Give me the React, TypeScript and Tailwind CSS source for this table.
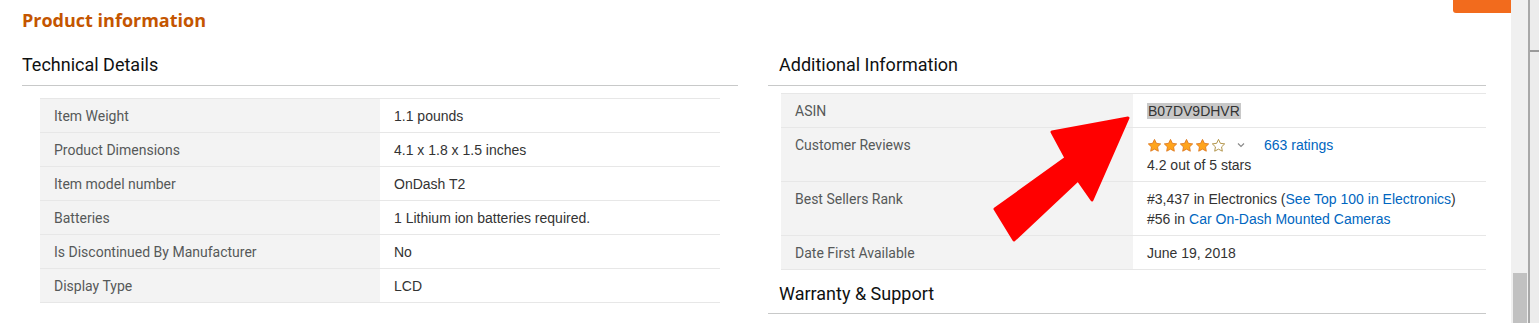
import React from "react";

const ember = { fontFamily: "Roboto, 'Noto Sans', sans-serif" };
const arial = { fontFamily: "'Liberation Sans', Arial, sans-serif" };

function Star({ filled }: { filled: boolean }) {
  return (
    <svg width="15" height="15" viewBox="0 0 24 24" className="mr-[1px]">
      <path
        d="M12 2.2l3 6.3 6.9 0.9-5 4.8 1.2 6.9L12 17.8l-6.1 3.3 1.2-6.9-5-4.8 6.9-0.9z"
        fill={filled ? "#ffa41c" : "#ffffff"}
        stroke={filled ? "#de7921" : "#a88734"}
        strokeWidth="1.4"
        strokeLinejoin="round"
      />
    </svg>
  );
}

function Row({
  label,
  children,
  lw,
  vw,
}: {
  label: string;
  children: React.ReactNode;
  lw: string;
  vw: string;
}) {
  return (
    <div className="flex border-b border-[#e7e7e7]">
      <div
        className={`${lw} bg-[#f3f3f3] pl-[14px] pt-[7px] pb-[6px] text-[14px] leading-[20px] text-[#565959]`}
        style={ember}
      >
        {label}
      </div>
      <div
        className={`${vw} pl-[14px] pt-[7px] pb-[6px] text-[14px] leading-[20px] text-[#333333]`}
        style={arial}
      >
        {children}
      </div>
    </div>
  );
}

function Heading({ children, indent }: { children: React.ReactNode; indent?: boolean }) {
  return (
    <div
      className={`${indent ? "pl-[11px]" : ""} pt-[13px] pb-[8px] border-b border-[#c8c9c9] text-[18px] leading-[24px] text-[#0f1111]`}
      style={ember}
    >
      {children}
    </div>
  );
}

export default function App() {
  const left: [string, string][] = [
    ["Item Weight", "1.1 pounds"],
    ["Product Dimensions", "4.1 x 1.8 x 1.5 inches"],
    ["Item model number", "OnDash T2"],
    ["Batteries", "1 Lithium ion batteries required."],
    ["Is Discontinued By Manufacturer", "No"],
    ["Display Type", "LCD"],
  ];
  return (
    <div className="relative flex w-[1539px] h-[323px] overflow-hidden bg-white">
      <div className="w-[1511px] flex flex-col">
        <div className="flex justify-between items-start h-[40px]">
          <div
            className="pl-[22px] pt-[8px] text-[18px] leading-[24px] font-bold text-[#c45500]"
            style={{ fontFamily: "'Open Sans', Roboto, sans-serif" }}
          >
            Product information
          </div>
          <div className="w-[58px] h-[13px] bg-[#f26b1d] rounded-bl-[3px]" />
        </div>
        <div className="flex">
          <div className="ml-[22px] w-[716px]">
            <Heading>Technical Details</Heading>
            <div className="ml-[18px] w-[680px] mt-[12px] border-t border-[#e7e7e7]">
              {left.map(([l, v]) => (
                <Row key={l} label={l} lw="w-[340px]" vw="w-[340px]">
                  {v}
                </Row>
              ))}
            </div>
          </div>
          <div className="ml-[30px] w-[718px]">
            <Heading indent>Additional Information</Heading>
            <div className="ml-[13px] w-[705px] mt-[7px] border-t border-[#e7e7e7]">
              <Row label="ASIN" lw="w-[352px]" vw="w-[353px]">
                <span className="bg-[#c8c8c8] px-[1px]">B07DV9DHVR</span>
              </Row>
              <Row label="Customer Reviews" lw="w-[352px]" vw="w-[353px]">
                <div className="flex items-center h-[20px]">
                  <div className="flex items-center">
                    <Star filled />
                    <Star filled />
                    <Star filled />
                    <Star filled />
                    <Star filled={false} />
                  </div>
                  <svg width="8" height="6" viewBox="0 0 8 6" className="ml-[10px]">
                    <path d="M1 1.5l3 3 3-3" fill="none" stroke="#8a8a8a" strokeWidth="1.2" />
                  </svg>
                  <span className="ml-[19px] text-[#0066c0]">663 ratings</span>
                </div>
                <div>4.2 out of 5 stars</div>
              </Row>
              <Row label="Best Sellers Rank" lw="w-[352px]" vw="w-[353px]">
                <div>
                  #3,437 in Electronics (
                  <span className="text-[#0066c0]">See Top 100 in Electronics</span>)
                </div>
                <div>
                  #56 in <span className="text-[#0066c0]">Car On-Dash Mounted Cameras</span>
                </div>
              </Row>
              <Row label="Date First Available" lw="w-[352px]" vw="w-[353px]">
                June 19, 2018
              </Row>
            </div>
            <div
              className="mt-[12px] pl-[11px] pb-[7px] border-b border-[#c8c9c9] text-[18px] leading-[24px] text-[#0f1111]"
              style={ember}
            >
              Warranty &amp; Support
            </div>
          </div>
        </div>
      </div>
      <div className="flex h-full">
        <div className="w-[17px] h-full bg-[#f0f0f0] flex flex-col justify-end items-center">
          <div className="w-[14px] h-[50px] bg-[#c1c1c1]" />
        </div>
        <div className="w-[2px] h-full bg-[#a8a8a8]" />
        <div className="w-[9px] h-full bg-[#ececec] flex flex-col">
          <div className="mt-[50px] h-[2px] bg-[#9a9a9a]" />
        </div>
      </div>
      <svg
        className="absolute left-0 top-0 pointer-events-none"
        width="1539"
        height="323"
        viewBox="0 0 1539 323"
      >
        <polygon
          points="1128,118 1052,132 1066,158 995,209 1014,240 1078,180 1092,200"
          fill="#ff0000"
          stroke="#ff0000"
          strokeWidth="3"
          strokeLinejoin="round"
        />
      </svg>
    </div>
  );
}
